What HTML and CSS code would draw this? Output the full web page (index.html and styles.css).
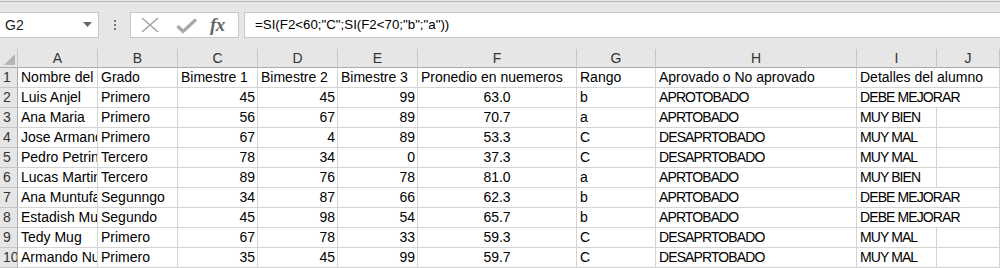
FILE: index.html
```html
<!DOCTYPE html>
<html>
<head>
<meta charset="utf-8">
<link rel="stylesheet" href="styles.css">
</head>
<body>
<div class="toolbar">
  <div class="namebox">
    <span class="nb-text">G2</span>
    <svg class="nb-arrow" width="9" height="5" viewBox="0 0 9 5"><polygon points="0,0 9,0 4.5,5" fill="#666"/></svg>
  </div>
  <div class="grip"><i></i><i></i><i></i></div>
  <div class="iconbox">
    <svg class="ic-x" width="18" height="16" viewBox="0 0 18 16"><path d="M1 1 L17 15 M17 1 L1 15" stroke="#a3a3a3" stroke-width="1.6" fill="none"/></svg>
    <svg class="ic-check" width="22" height="16" viewBox="0 0 22 16"><path d="M1.5 8 L7 13.5 L20 1.5" stroke="#a8a8a8" stroke-width="3.2" fill="none"/></svg>
    <span class="ic-fx">fx</span>
  </div>
  <div class="formula">=SI(F2&lt;60;"C";SI(F2&lt;70;"b";"a"))</div>
</div>
<div class="sheet">
  <div class="corner"><svg width="11" height="11" viewBox="0 0 11 11"><polygon points="11,0 11,11 0,11" fill="#b5b5b5"/></svg></div>
  <div class="ch">A</div><div class="ch">B</div><div class="ch">C</div><div class="ch">D</div><div class="ch">E</div><div class="ch">F</div><div class="ch">G</div><div class="ch">H</div><div class="ch">I</div><div class="ch">J</div>

  <div class="rh">1</div>
  <div class="c">Nombre del alumno</div><div class="c">Grado</div><div class="c">Bimestre 1</div><div class="c">Bimestre 2</div><div class="c">Bimestre 3</div><div class="c">Pronedio en nuemeros</div><div class="c">Rango</div><div class="c">Aprovado o No aprovado</div><div class="c span2">Detalles del alumno</div>

  <div class="rh">2</div>
  <div class="c">Luis Anjel</div><div class="c">Primero</div><div class="c n">45</div><div class="c n">45</div><div class="c n">99</div><div class="c m">63.0</div><div class="c">b</div><div class="c up">APROTOBADO</div><div class="c up span2">DEBE MEJORAR</div>

  <div class="rh">3</div>
  <div class="c">Ana Maria</div><div class="c">Primero</div><div class="c n">56</div><div class="c n">67</div><div class="c n">89</div><div class="c m">70.7</div><div class="c">a</div><div class="c up">APRTOBADO</div><div class="c up">MUY BIEN</div><div class="c"></div>

  <div class="rh">4</div>
  <div class="c">Jose Armando</div><div class="c">Primero</div><div class="c n">67</div><div class="c n">4</div><div class="c n">89</div><div class="c m">53.3</div><div class="c">C</div><div class="c up">DESAPRTOBADO</div><div class="c up">MUY MAL</div><div class="c"></div>

  <div class="rh">5</div>
  <div class="c">Pedro Petrino</div><div class="c">Tercero</div><div class="c n">78</div><div class="c n">34</div><div class="c n">0</div><div class="c m">37.3</div><div class="c">C</div><div class="c up">DESAPRTOBADO</div><div class="c up">MUY MAL</div><div class="c"></div>

  <div class="rh">6</div>
  <div class="c">Lucas Martinez</div><div class="c">Tercero</div><div class="c n">89</div><div class="c n">76</div><div class="c n">78</div><div class="c m">81.0</div><div class="c">a</div><div class="c up">APRTOBADO</div><div class="c up">MUY BIEN</div><div class="c"></div>

  <div class="rh">7</div>
  <div class="c">Ana Muntufar</div><div class="c">Segunngo</div><div class="c n">34</div><div class="c n">87</div><div class="c n">66</div><div class="c m">62.3</div><div class="c">b</div><div class="c up">APRTOBADO</div><div class="c up span2">DEBE MEJORAR</div>

  <div class="rh">8</div>
  <div class="c">Estadish Muxa</div><div class="c">Segundo</div><div class="c n">45</div><div class="c n">98</div><div class="c n">54</div><div class="c m">65.7</div><div class="c">b</div><div class="c up">APRTOBADO</div><div class="c up span2">DEBE MEJORAR</div>

  <div class="rh">9</div>
  <div class="c">Tedy Mug</div><div class="c">Primero</div><div class="c n">67</div><div class="c n">78</div><div class="c n">33</div><div class="c m">59.3</div><div class="c">C</div><div class="c up">DESAPRTOBADO</div><div class="c up">MUY MAL</div><div class="c"></div>

  <div class="rh">10</div>
  <div class="c">Armando Nuñez</div><div class="c">Primero</div><div class="c n">35</div><div class="c n">45</div><div class="c n">99</div><div class="c m">59.7</div><div class="c">C</div><div class="c up">DESAPRTOBADO</div><div class="c up">MUY MAL</div><div class="c"></div>
</div>
</body>
</html>
```

FILE: styles.css
```css
html, body {
  margin: 0;
  padding: 0;
  background: #e6e6e6;
  font-family: "Liberation Sans", Arial, sans-serif;
  overflow: hidden;
}
.toolbar {
  margin-top: 1px;
  border-top: 1px solid #b9b9b9;
  height: 46px;
  display: flex;
  align-items: flex-start;
  padding-top: 10px;
  box-sizing: border-box;
}
.namebox {
  width: 99px;
  height: 26px;
  box-sizing: border-box;
  background: #fff;
  border: 1px solid #c6c6c6;
  border-left: none;
  display: flex;
  align-items: center;
  justify-content: space-between;
  padding: 0 6px 0 5px;
  font-size: 14px;
  color: #222;
}
.nb-arrow { margin-top: -2px; }
.grip {
  width: 31px;
  height: 26px;
  display: flex;
  flex-direction: column;
  align-items: center;
  justify-content: center;
  gap: 2px;
}
.grip i {
  display: block;
  width: 2px;
  height: 2px;
  background: #777;
}
.iconbox {
  width: 109px;
  height: 26px;
  box-sizing: border-box;
  background: #fff;
  border: 1px solid #c6c6c6;
  display: flex;
  align-items: center;
  padding-left: 10px;
}
.ic-x { margin-right: 17px; }
.ic-check { margin-right: 12px; margin-top: 2px; }
.ic-fx {
  font-family: "Liberation Serif", "Times New Roman", serif;
  font-style: italic;
  font-weight: bold;
  font-size: 19px;
  color: #666;
  letter-spacing: -0.5px;
}
.formula {
  flex: 1;
  margin-left: 5px;
  height: 26px;
  box-sizing: border-box;
  background: #fff;
  border: 1px solid #c6c6c6;
  border-right: none;
  font-size: 13.3px;
  line-height: 24px;
  padding-left: 10px;
  color: #000;
  white-space: nowrap;
}
.sheet {
  margin-top: 2px;
  display: grid;
  grid-template-columns: 18px 80px 80px 80px 80px 80px 159px 79px 201px 80px 63px;
  grid-template-rows: 19px;
  grid-auto-rows: 20px;
}
.corner {
  background: #e6e6e6;
  border-right: 1px solid #c6c6c6;
  border-bottom: 1px solid #ababab;
  box-sizing: border-box;
  display: flex;
  align-items: flex-end;
  justify-content: flex-end;
  padding: 0 2px 2px 0;
}
.ch {
  background: #e6e6e6;
  border-right: 1px solid #c6c6c6;
  border-bottom: 1px solid #ababab;
  box-sizing: border-box;
  text-align: center;
  font-size: 14px;
  line-height: 18px;
  color: #333;
}
.rh {
  background: #e6e6e6;
  border-right: 1px solid #ababab;
  border-bottom: 1px solid #c6c6c6;
  box-sizing: border-box;
  font-size: 14px;
  line-height: 19px;
  color: #333;
  padding-left: 3px;
  white-space: nowrap;
  overflow: hidden;
}
.rh:last-child { padding-left: 1px; }
.c {
  background: #fff;
  border-right: 1px solid #d4d4d4;
  border-bottom: 1px solid #d4d4d4;
  box-sizing: border-box;
  font-size: 14px;
  line-height: 19px;
  color: #000;
  padding: 0 3px;
  white-space: nowrap;
  overflow: hidden;
}
.c.n { text-align: right; padding-right: 2px; }
.c.m { text-align: center; }
.c.up { letter-spacing: -0.9px; }
.c.span2 { grid-column: span 2; }
```
